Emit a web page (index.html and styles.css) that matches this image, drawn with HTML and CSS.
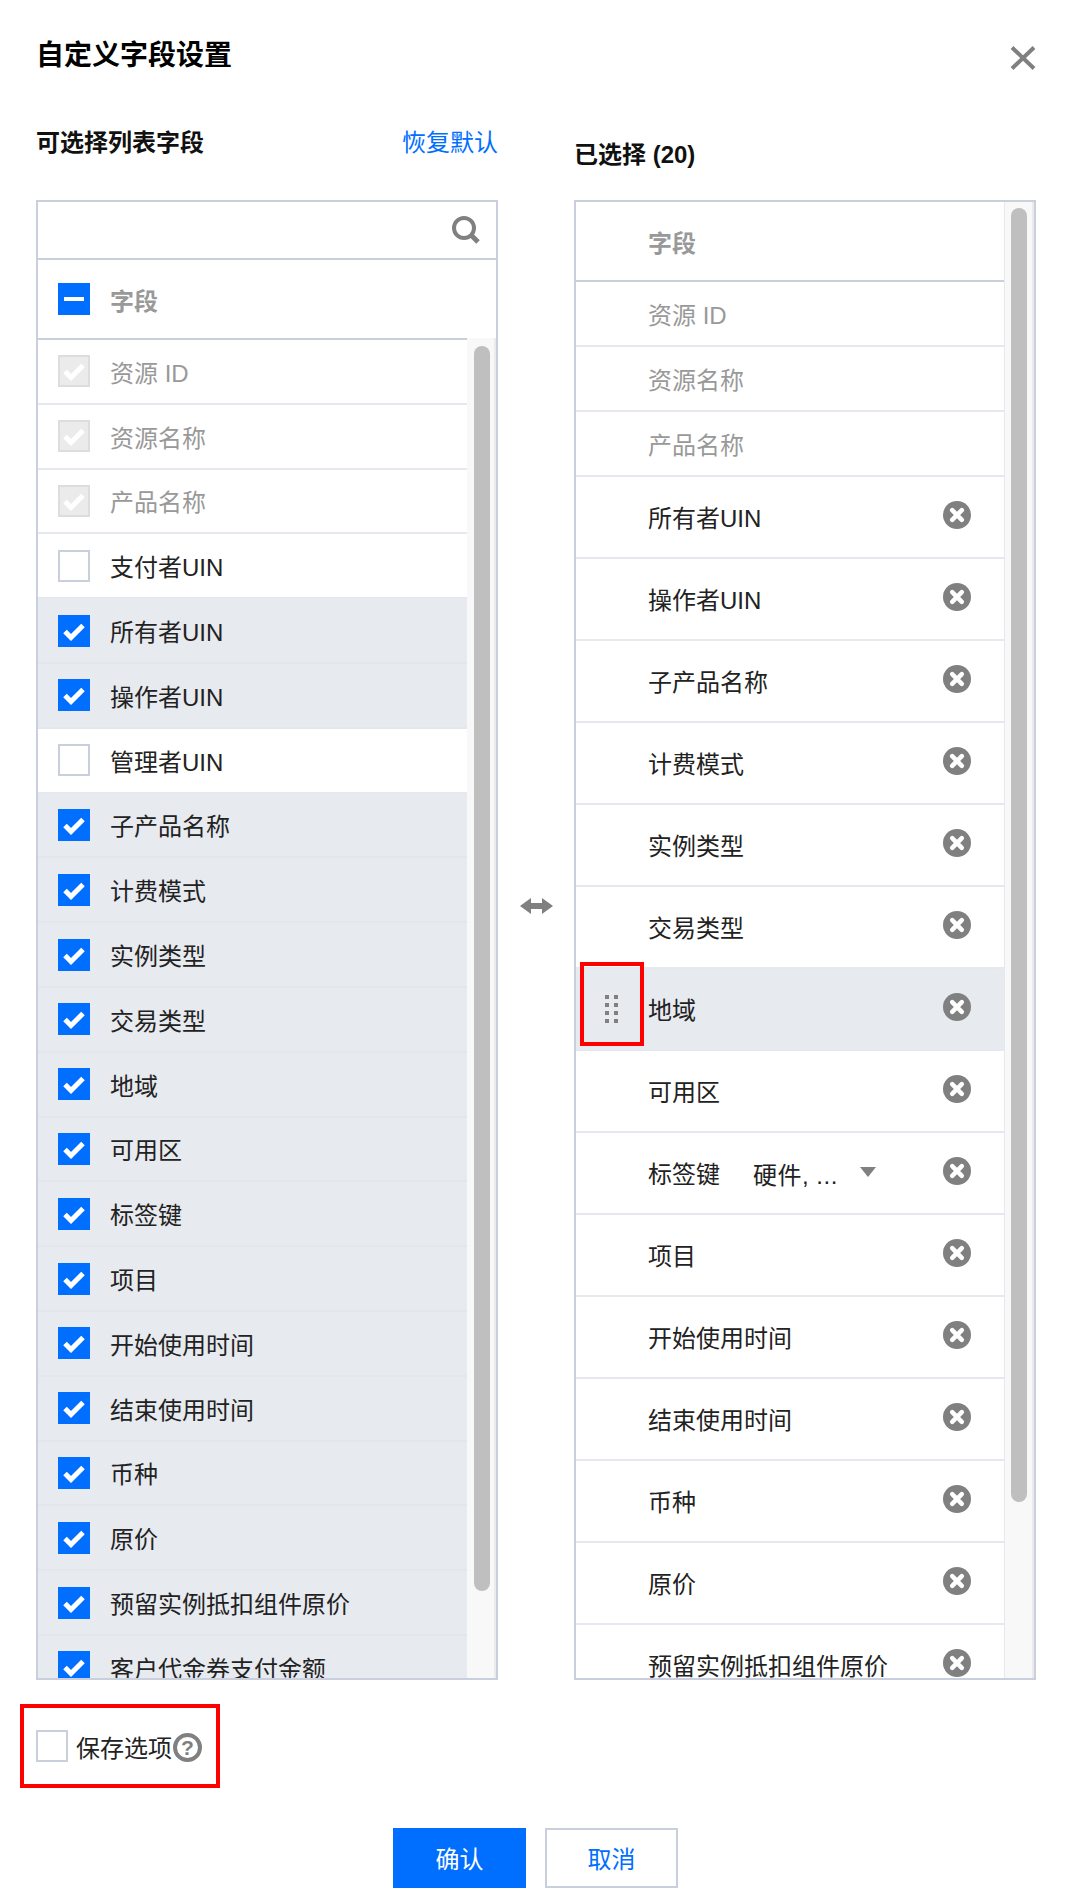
FILE: index.html
```html
<!DOCTYPE html>
<html lang="zh-CN">
<head>
    <meta charset="UTF-8">
    <title>自定义字段设置</title>
    <link rel="stylesheet" href="styles.css">
</head>
<body>
    <!-- Icon sprites -->
    <svg class="sprites" width="0" height="0">
        <symbol id="i-check" viewBox="0 0 32 32"><path d="M7 16.500l6 6 12-12" fill="none" stroke="currentColor" stroke-width="5"/></symbol>
        <symbol id="i-remove" viewBox="0 0 28 28"><circle cx="14" cy="14" r="14" fill="#808080"/><path d="M9.200 9.200l9.600 9.600M18.800 9.200l-9.600 9.600" stroke="#fff" stroke-width="4.500" stroke-linecap="round"/></symbol>
    </svg>

    <section class="dialog">
        <header class="dialog-title">
            <h2>自定义字段设置</h2>
            <svg class="close" width="26" height="24" viewBox="0 0 26 24"><path d="M2 1.500l22 21M24 1.500l-22 21" stroke="#808080" stroke-width="4"/></svg>
        </header>

        <div class="transfer">
            <!-- Left panel -->
            <div class="panel">
                <div class="panel-head panel-head-left">
                    <h3>可选择列表字段</h3>
                    <a class="link">恢复默认</a>
                </div>
                <div class="box">
                    <div class="search">
                        <svg width="28" height="28" viewBox="0 0 28 28"><circle cx="12" cy="12" r="10" fill="none" stroke="#808080" stroke-width="4"/><path d="M19 19l7 7" stroke="#808080" stroke-width="5"/></svg>
                    </div>
                    <div class="list-head">
                        <span class="cb cb-on"><i class="minus"></i></span>
                        <span>字段</span>
                    </div>
                    <div class="scroll-body">
                        <ul class="list">
                            <li class="pick off"><span class="cb cb-off"><svg><use href="#i-check"/></svg></span>资源 ID</li>
                            <li class="pick off"><span class="cb cb-off"><svg><use href="#i-check"/></svg></span>资源名称</li>
                            <li class="pick off"><span class="cb cb-off"><svg><use href="#i-check"/></svg></span>产品名称</li>
                            <li class="pick"><span class="cb"></span>支付者UIN</li>
                            <li class="pick on"><span class="cb cb-on"><svg><use href="#i-check"/></svg></span>所有者UIN</li>
                            <li class="pick on"><span class="cb cb-on"><svg><use href="#i-check"/></svg></span>操作者UIN</li>
                            <li class="pick"><span class="cb"></span>管理者UIN</li>
                            <li class="pick on"><span class="cb cb-on"><svg><use href="#i-check"/></svg></span>子产品名称</li>
                            <li class="pick on"><span class="cb cb-on"><svg><use href="#i-check"/></svg></span>计费模式</li>
                            <li class="pick on"><span class="cb cb-on"><svg><use href="#i-check"/></svg></span>实例类型</li>
                            <li class="pick on"><span class="cb cb-on"><svg><use href="#i-check"/></svg></span>交易类型</li>
                            <li class="pick on"><span class="cb cb-on"><svg><use href="#i-check"/></svg></span>地域</li>
                            <li class="pick on"><span class="cb cb-on"><svg><use href="#i-check"/></svg></span>可用区</li>
                            <li class="pick on"><span class="cb cb-on"><svg><use href="#i-check"/></svg></span>标签键</li>
                            <li class="pick on"><span class="cb cb-on"><svg><use href="#i-check"/></svg></span>项目</li>
                            <li class="pick on"><span class="cb cb-on"><svg><use href="#i-check"/></svg></span>开始使用时间</li>
                            <li class="pick on"><span class="cb cb-on"><svg><use href="#i-check"/></svg></span>结束使用时间</li>
                            <li class="pick on"><span class="cb cb-on"><svg><use href="#i-check"/></svg></span>币种</li>
                            <li class="pick on"><span class="cb cb-on"><svg><use href="#i-check"/></svg></span>原价</li>
                            <li class="pick on"><span class="cb cb-on"><svg><use href="#i-check"/></svg></span>预留实例抵扣组件原价</li>
                            <li class="pick on"><span class="cb cb-on"><svg><use href="#i-check"/></svg></span>客户代金券支付金额</li>
                        </ul>
                        <div class="track track-left"><div class="thumb"></div></div>
                    </div>
                </div>
            </div>

            <!-- Arrow between panels -->
            <div class="swap">
                <svg width="33" height="16" viewBox="0 0 33 16"><path d="M0 8l11-8v5h11v-5l11 8-11 8v-5h-11v5z" fill="#808080"/></svg>
            </div>

            <!-- Right panel -->
            <div class="panel">
                <div class="panel-head panel-head-right">
                    <h3>已选择 (20)</h3>
                </div>
                <div class="box box-row">
                    <div class="sel-wrap">
                        <div class="sel-head">字段</div>
                        <ul class="sel-list">
                            <li class="fixed">资源 ID</li>
                            <li class="fixed">资源名称</li>
                            <li class="fixed">产品名称</li>
                            <li class="item"><span class="name">所有者UIN</span><svg class="rm"><use href="#i-remove"/></svg></li>
                            <li class="item"><span class="name">操作者UIN</span><svg class="rm"><use href="#i-remove"/></svg></li>
                            <li class="item"><span class="name">子产品名称</span><svg class="rm"><use href="#i-remove"/></svg></li>
                            <li class="item"><span class="name">计费模式</span><svg class="rm"><use href="#i-remove"/></svg></li>
                            <li class="item"><span class="name">实例类型</span><svg class="rm"><use href="#i-remove"/></svg></li>
                            <li class="item"><span class="name">交易类型</span><svg class="rm"><use href="#i-remove"/></svg></li>
                            <li class="item hover">
                                <svg class="drag" width="13" height="28" viewBox="0 0 13 28">
                                    <path d="M0 0h4v4h-4zM9 0h4v4h-4zM0 8h4v4h-4zM9 8h4v4h-4zM0 16h4v4h-4zM9 16h4v4h-4zM0 24h4v4h-4zM9 24h4v4h-4z" fill="#808080"/>
                                </svg>
                                <span class="name">地域</span><svg class="rm"><use href="#i-remove"/></svg>
                            </li>
                            <li class="item"><span class="name">可用区</span><svg class="rm"><use href="#i-remove"/></svg></li>
                            <li class="item">
                                <span class="name">标签键</span>
                                <span class="tag-select">硬件, ...<i class="caret"></i></span>
                                <svg class="rm"><use href="#i-remove"/></svg>
                            </li>
                            <li class="item"><span class="name">项目</span><svg class="rm"><use href="#i-remove"/></svg></li>
                            <li class="item"><span class="name">开始使用时间</span><svg class="rm"><use href="#i-remove"/></svg></li>
                            <li class="item"><span class="name">结束使用时间</span><svg class="rm"><use href="#i-remove"/></svg></li>
                            <li class="item"><span class="name">币种</span><svg class="rm"><use href="#i-remove"/></svg></li>
                            <li class="item"><span class="name">原价</span><svg class="rm"><use href="#i-remove"/></svg></li>
                            <li class="item"><span class="name">预留实例抵扣组件原价</span><svg class="rm"><use href="#i-remove"/></svg></li>
                        </ul>
                    </div>
                    <div class="track track-right"><div class="thumb"></div></div>
                </div>
            </div>
        </div>

        <div class="save-row">
            <span class="cb"></span>
            <span class="save-label">保存选项</span>
            <span class="help">?</span>
        </div>

        <footer class="actions">
            <button class="btn btn-primary">确认</button>
            <button class="btn btn-weak">取消</button>
        </footer>

        <!-- Red annotation boxes -->
        <div class="mark mark-drag"></div>
        <div class="mark mark-save"></div>
    </section>
</body>
</html>
```

FILE: styles.css
```css
/* General Reset */
* {
    margin: 0;
    padding: 0;
    box-sizing: border-box;
}

body {
    font-family: "Liberation Sans", "Noto Sans CJK SC", sans-serif;
    font-size: 24px;
    color: #222;
    background-color: #fff;
}

ul {
    list-style: none;
}

.sprites {
    position: absolute;
}

.dialog {
    position: relative;
    width: 1077px;
    height: 1903px;
    padding: 0 41px 0 36px;
}

/* Title */
.dialog-title {
    height: 120px;
    display: flex;
    justify-content: space-between;
    padding-top: 38px;
}

.dialog-title h2 {
    font-size: 28px;
    line-height: 36px;
    color: #000;
}

.close {
    margin-top: 8px;
}

/* Transfer */
.transfer {
    display: flex;
    height: 1560px;
}

.panel {
    width: 462px;
    flex: none;
}

.panel-head {
    height: 80px;
    display: flex;
    justify-content: space-between;
    line-height: 28px;
}

.panel-head-left {
    padding-top: 9px;
}

.panel-head-right {
    padding-top: 21px;
}

.panel-head h3 {
    font-size: 24px;
    color: #111;
}

.link {
    color: #006eff;
}

.box {
    height: 1480px;
    border: 2px solid #c9cfdc;
    overflow: hidden;
    display: flex;
    flex-direction: column;
}

.box-row {
    flex-direction: row;
}

.search {
    flex: none;
    height: 58px;
    border-bottom: 2px solid #c9cfdc;
    display: flex;
    justify-content: flex-end;
    align-items: center;
    padding-right: 16px;
}

.list-head {
    flex: none;
    height: 78px;
    display: flex;
    align-items: center;
    padding-left: 20px;
    font-weight: bold;
    color: #999;
}

.scroll-body {
    flex: 1;
    display: flex;
    min-height: 0;
}

/* Left list */
.list {
    width: 429px;
    flex: none;
    border-top: 2px solid #c9cfdc;
}

.pick {
    height: 64.800px;
    display: flex;
    align-items: center;
    padding-left: 20px;
    border-bottom: 2px solid #e5e8ee;
}

.pick.off {
    color: #999;
}

.pick.on {
    background-color: #e7eaef;
    border-bottom-color: #e3e6ea;
}

/* Checkbox */
.cb {
    flex: none;
    width: 32px;
    height: 32px;
    margin-right: 20px;
    border: 2px solid #c9cfdc;
    background-color: #fff;
    display: flex;
    align-items: center;
    justify-content: center;
}

.cb svg {
    flex: none;
    width: 32px;
    height: 32px;
}

.cb-on {
    background-color: #006eff;
    border-color: #006eff;
    color: #fff;
}

.cb-off {
    background-color: #ebebeb;
    border-color: #ddd;
    color: #fff;
}

.minus {
    width: 20px;
    height: 4px;
    background-color: #fff;
}

/* Scrollbars */
.track {
    flex: 1;
    background-color: #f8f8f8;
    border-right: 2px solid #ebebeb;
}

.thumb {
    width: 16px;
    background-color: #bfbfbf;
    border-radius: 8px;
}

.track-left .thumb {
    height: 1245px;
    margin: 8px 0 0 7px;
}

.track-right {
    border-left: 1px solid #e5e8ee;
}

.track-right .thumb {
    height: 1294px;
    margin: 6px 0 0 6px;
}

/* Arrow */
.swap {
    width: 76px;
    flex: none;
    display: flex;
    align-items: center;
    justify-content: center;
    padding-top: 12px;
}

/* Right list */
.sel-wrap {
    width: 428px;
    flex: none;
}

.sel-head {
    height: 80px;
    border-bottom: 2px solid #c9cfdc;
    display: flex;
    align-items: center;
    padding-left: 72px;
    font-weight: bold;
    color: #999;
}

.fixed,
.item {
    display: flex;
    align-items: center;
    padding-left: 72px;
    border-bottom: 2px solid #e5e8ee;
}

.fixed {
    height: 65px;
    color: #999;
}

.item {
    position: relative;
    height: 82px;
}

.item.hover {
    background-color: #e7eaef;
}

.name {
    line-height: 32px;
    margin-top: 4px;
}

.rm {
    position: absolute;
    right: 33px;
    top: 24px;
    width: 28px;
    height: 28px;
}

.drag {
    position: absolute;
    left: 29px;
    top: 26px;
}

.tag-select {
    display: flex;
    position: relative;
    margin-left: 33px;
    margin-top: 6px;
    line-height: 32px;
    letter-spacing: 0.500px;
}

.caret {
    position: absolute;
    left: 107px;
    top: 7px;
    width: 0;
    height: 0;
    border-left: 8px solid transparent;
    border-right: 8px solid transparent;
    border-top: 10px solid #808080;
}

/* Save option */
.save-row {
    display: flex;
    align-items: center;
    height: 32px;
    margin-top: 50px;
}

.save-row .cb {
    margin-right: 8px;
}

.help {
    width: 29px;
    height: 29px;
    margin: 2px 0 0 1px;
    border: 4px solid #808080;
    border-radius: 50%;
    color: #808080;
    font-size: 21px;
    font-weight: bold;
    line-height: 21px;
    text-align: center;
}

/* Footer */
.actions {
    display: flex;
    gap: 19px;
    margin: 66px 0 0 357px;
}

.btn {
    width: 133px;
    height: 60px;
    padding-bottom: 2px;
    font-family: inherit;
    font-size: 24px;
    border: 2px solid #c9cfdc;
    background-color: #fff;
    color: #006eff;
}

.btn-primary {
    background-color: #006eff;
    border-color: #006eff;
    color: #fff;
}

/* Annotation overlays */
.mark {
    position: absolute;
    border: 4px solid #f00;
}

.mark-drag {
    left: 580px;
    top: 962px;
    width: 64px;
    height: 84px;
}

.mark-save {
    left: 20px;
    top: 1704px;
    width: 200px;
    height: 84px;
}
```
